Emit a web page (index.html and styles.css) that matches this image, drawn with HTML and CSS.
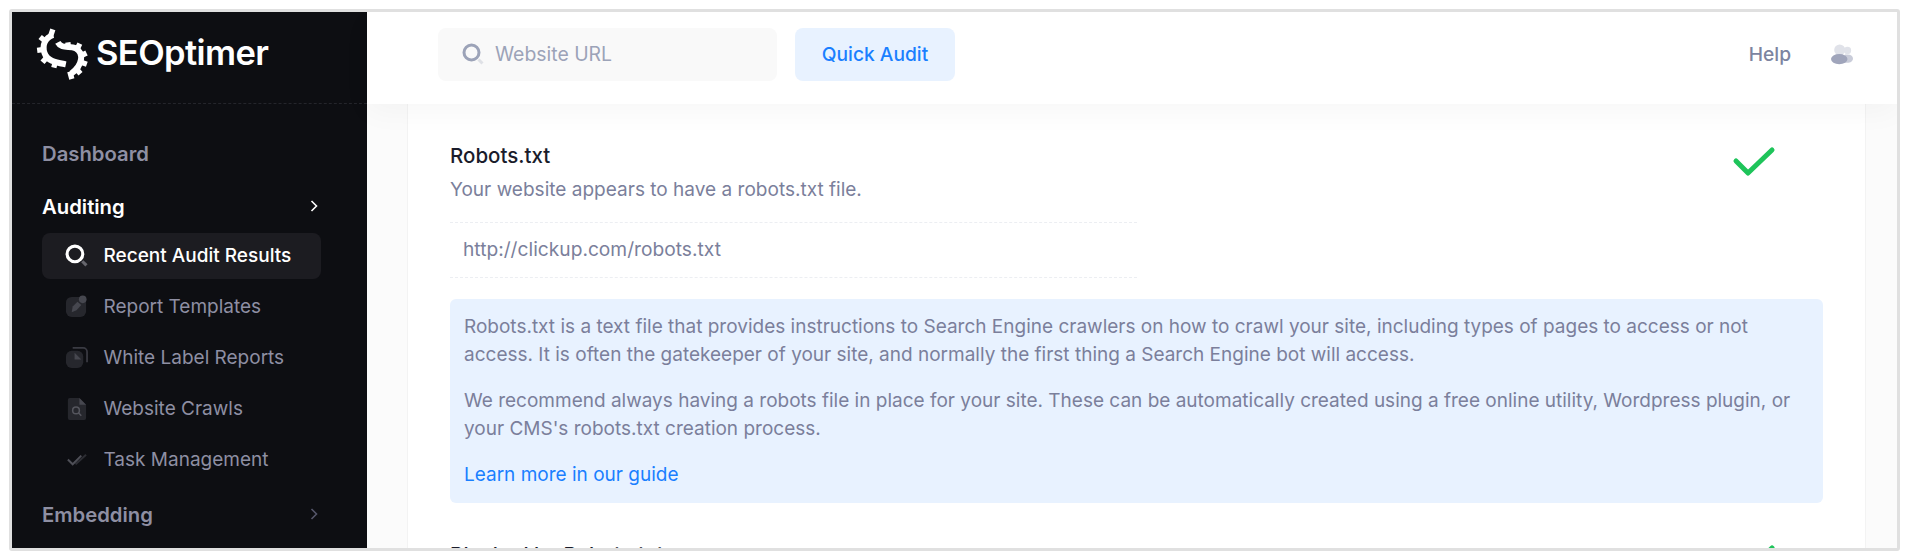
FILE: index.html
```html
<!DOCTYPE html>
<html lang="en">
<head>
<meta charset="utf-8">
<title>SEOptimer</title>
<link rel="stylesheet" href="styles.css">
</head>
<body>
<div class="frame">
  <aside class="sidebar">
    <div class="brand">
      <svg class="brand-mark" viewBox="45 35 155 165" aria-hidden="true">
        <g class="gear">
          <path class="gear-ring" d="M96 62C72 70 62 92 70 116C78 140 104 144 134 150"/>
          <path class="gear-ring" d="M110 84C122 106 146 92 164 102C188 116 186 152 150 178"/>
          <path class="gear-teeth" d="M88 66L95 45M72 80L57 68M64 106L48 108M76 130L64 144M102 144L98 160"/>
          <path class="gear-teeth" d="M142 100L140 84M168 104L176 88M180 124L196 116M180 144L197 150M166 164L178 178M146 172L152 194"/>
        </g>
      </svg>
      <span class="brand-name">SEOptimer</span>
    </div>
    <nav class="nav">
      <a class="nav-head">Dashboard</a>
      <a class="nav-head is-open">Auditing
        <svg class="chev" viewBox="0 0 10 14"><path d="M2.500 2l5 5-5 5"/></svg>
      </a>
      <ul class="subnav">
        <li class="sub is-active">
          <svg class="ico" viewBox="1 1 22 22"><circle class="ring" cx="10.500" cy="10.500" r="7.500"/><path class="handle" d="M17.500 17.500l4 4"/></svg>
          Recent Audit Results
        </li>
        <li class="sub">
          <svg class="ico" viewBox="0 0 24 24"><rect class="dim" x="1" y="2" width="21" height="21" rx="6"/><path class="mid" d="M8 12l5-5 4 3.500-5 5.500-5 2z"/><circle class="mid" cx="18.500" cy="4.500" r="4"/></svg>
          Report Templates
        </li>
        <li class="sub">
          <svg class="ico" viewBox="0 0 24 24"><path class="outline" d="M8 2h11a4 4 0 0 1 4 4v11"/><rect class="dim" x="1" y="5" width="18" height="18" rx="6"/><path class="mid" d="M10 7l7 7h-7z"/></svg>
          White Label Reports
        </li>
        <li class="sub">
          <svg class="ico" viewBox="0 0 24 24"><path class="dim" d="M5 1h10l7 7v14a2 2 0 0 1-2 2H5a2 2 0 0 1-2-2V3a2 2 0 0 1 2-2z"/><path class="mid" d="M15 1l7 7h-7z"/><circle class="lens" cx="11.500" cy="14" r="3.500"/><path class="lens" d="M14 16.500l3 3"/></svg>
          Website Crawls
        </li>
        <li class="sub">
          <svg class="ico" viewBox="0 0 24 24"><path class="tick-back" d="M11 17l11-10"/><path class="tick" d="M3 12l5 5 9-9"/></svg>
          Task Management
        </li>
      </ul>
      <a class="nav-head">Embedding
        <svg class="chev" viewBox="0 0 10 14"><path d="M2.500 2l5 5-5 5"/></svg>
      </a>
    </nav>
  </aside>
  <div class="main">
    <header class="topbar">
      <div class="search">
        <svg class="search-ico" viewBox="1 1 22 22"><circle class="search-ring" cx="10.500" cy="10.500" r="7.500"/><path class="search-handle" d="M17.500 17.500l4 4"/></svg>
        <span class="search-text">Website URL</span>
      </div>
      <button class="audit-btn">Quick Audit</button>
      <div class="top-right">
        <span class="help">Help</span>
        <svg class="users" viewBox="0 0 24 22"><circle class="u-light" cx="18" cy="6.500" r="4"/><path class="u-mid" d="M15 11h3c4 0 6 2 6 4.500S21 20 18 20h-3z"/><circle class="u-light" cx="9.500" cy="6" r="6"/><ellipse class="u-dark" cx="9" cy="16" rx="9" ry="5.500"/></svg>
      </div>
    </header>
    <div class="content">
      <section class="card">
        <div class="check-row">
          <div class="check-body">
            <h3 class="check-title">Robots.txt</h3>
            <p class="check-desc">Your website appears to have a robots.txt file.</p>
            <div class="check-url">http://clickup.com/robots.txt</div>
          </div>
          <svg class="pass" viewBox="0 0 44 32"><path d="M4 15l12 12L40 4"/></svg>
        </div>
        <div class="note">
          <p>Robots.txt is a text file that provides instructions to Search Engine crawlers on how to crawl your site, including types of pages to access or not access. It is often the gatekeeper of your site, and normally the first thing a Search Engine bot will access.</p>
          <p>We recommend always having a robots file in place for your site. These can be automatically created using a free online utility, Wordpress plugin, or your CMS's robots.txt creation process.</p>
          <a class="note-link">Learn more in our guide</a>
        </div>
        <div class="check-row next">
          <h3 class="check-title">Blocked by Robots.txt</h3>
          <svg class="pass" viewBox="0 0 44 32"><path d="M4 15l12 12L40 4"/></svg>
        </div>
      </section>
    </div>
  </div>
</div>
</body>
</html>
```
FILE: styles.css
```css
* { box-sizing: border-box; }
html, body { height: 100%; }
body {
  margin: 0;
  padding: 9px 10px 9px 9px;
  background: #fff;
  font-family: Inter, "Liberation Sans", sans-serif;
  overflow: hidden;
}
.frame {
  display: flex;
  height: 542px;
  border: 3px solid #e0e0e0;
  border-radius: 3px;
  overflow: hidden;
  background: #fbfbfb;
}
.sidebar {
  width: 355px;
  flex: none;
  background: #0d0e12;
  color: #8e8fa3;
}
.brand {
  display: flex;
  align-items: center;
  gap: 8px;
  height: 92px;
  padding: 1px 0 9px 24px;
  border-bottom: 1px dashed #24252b;
}
.brand-mark { width: 52px; height: 55px; flex: none; }
.gear { fill: none; stroke: #fff; }
.gear-ring { stroke-width: 18; }
.gear-teeth { stroke-width: 16; }
.brand-name {
  font-size: 34.500px;
  font-weight: 600;
  letter-spacing: -0.6px;
  color: #fff;
  line-height: 1;
}
.nav { padding: 37px 46px 0 30px; }
.nav-head {
  display: flex;
  align-items: center;
  justify-content: space-between;
  height: 24px;
  font-size: 20.300px;
  font-weight: 600;
  color: #8e8fa3;
  margin-bottom: 29px;
}
.nav-head.is-open { color: #fff; font-weight: 600; margin-bottom: 15px; }
.chev { width: 10px; height: 14px; fill: none; stroke: currentColor; stroke-width: 1.600; margin-right: 2px; }
.nav-head:last-child .chev { stroke: #55566a; }
.subnav { list-style: none; margin: 0 0 19px; padding: 0; }
.sub {
  display: flex;
  align-items: center;
  gap: 15.500px;
  height: 46px;
  margin-bottom: 5px;
  padding: 0 0 1px 23px;
  border-radius: 8px;
  font-size: 19px;
  color: #8e8fa3;
}
.sub:last-child { margin-bottom: 0; }
.sub.is-active { background: #1c1c21; color: #fff; font-weight: 500; }
.ico { width: 23px; height: 23px; flex: none; }
.ring { fill: none; stroke: #fff; stroke-width: 3; }
.handle { stroke: #66666d; stroke-width: 3; fill: none; }
.dim { fill: #26272d; }
.mid { fill: #46474f; }
.outline { fill: none; stroke: #3a3b43; stroke-width: 1.800; }
.lens { fill: none; stroke: #55565e; stroke-width: 1.600; }
.tick { fill: none; stroke: #4e4f57; stroke-width: 2; }
.tick-back { fill: none; stroke: #2c2d33; stroke-width: 2; }
.main {
  flex: 1;
  min-width: 0;
  display: flex;
  flex-direction: column;
}
.topbar {
  position: relative;
  z-index: 1;
  flex: none;
  display: flex;
  align-items: center;
  height: 92px;
  padding: 0 0 8px 71px;
  background: #fff;
  box-shadow: 0 8px 30px rgba(0, 0, 0, .035);
}
.search {
  display: flex;
  align-items: center;
  gap: 11px;
  width: 339px;
  height: 53px;
  padding-left: 24px;
  background: #f9f9f9;
  border-radius: 8px;
}
.search-ico { width: 22px; height: 22px; flex: none; }
.search-ring { fill: none; stroke: #9ca3b8; stroke-width: 3; }
.search-handle { fill: none; stroke: #dfe1e6; stroke-width: 3; }
.search-text { font-size: 19.400px; color: #9ca3b8; }
.audit-btn {
  width: 160px;
  height: 53px;
  margin-left: 18px;
  border: 0;
  border-radius: 8px;
  background: #e8f2ff;
  color: #1a7fff;
  font: 500 19.200px Inter, "Liberation Sans", sans-serif;
}
.top-right {
  display: flex;
  align-items: center;
  gap: 40px;
  margin-left: auto;
  padding-right: 44px;
}
.help { font-size: 19.200px; font-weight: 500; color: #7c84a0; }
.users { width: 22px; height: 21px; }
.u-light { fill: #e0e2e9; }
.u-mid { fill: #c9ccd9; }
.u-dark { fill: #a0a5bb; }
.content {
  flex: 1;
  min-height: 0;
  overflow: hidden;
  padding: 0 31px 0 40px;
}
.card {
  height: 100%;
  padding: 41px 42px 0;
  background: #fff;
  border: solid #f3f3f3;
  border-width: 0 1px;
  overflow: hidden;
}
.check-row { display: flex; justify-content: space-between; align-items: flex-start; }
.check-body { width: 687px; }
.check-title { margin: 0; font-size: 20.500px; font-weight: 500; line-height: 22px; color: #1a1c2b; }
.check-desc { margin: 12px 0 0; font-size: 19.050px; line-height: 22px; color: #7b7f9b; }
.check-url {
  margin-top: 21px;
  height: 56px;
  padding-left: 13px;
  font-size: 19.200px;
  line-height: 53px;
  color: #7b7f9b;
  border: dashed #eceef2;
  border-width: 1px 0;
}
.pass {
  width: 44px;
  height: 32px;
  margin: 1px 47px 0 0;
  fill: none;
  stroke: #1ec45a;
  stroke-width: 5;
  stroke-linecap: round;
  stroke-linejoin: round;
}
.note {
  margin-top: 21px;
  padding: 14px 14px 13px;
  height: 204px;
  background: #e8f2ff;
  border-radius: 6px;
  font-size: 19px;
  line-height: 28px;
  color: #7b7f9b;
}
.note p { margin: 0 0 18px; }
.note-link { color: #1a7fff; }
.next { margin-top: 41px; }
.next .pass { margin-top: 0; }
```
